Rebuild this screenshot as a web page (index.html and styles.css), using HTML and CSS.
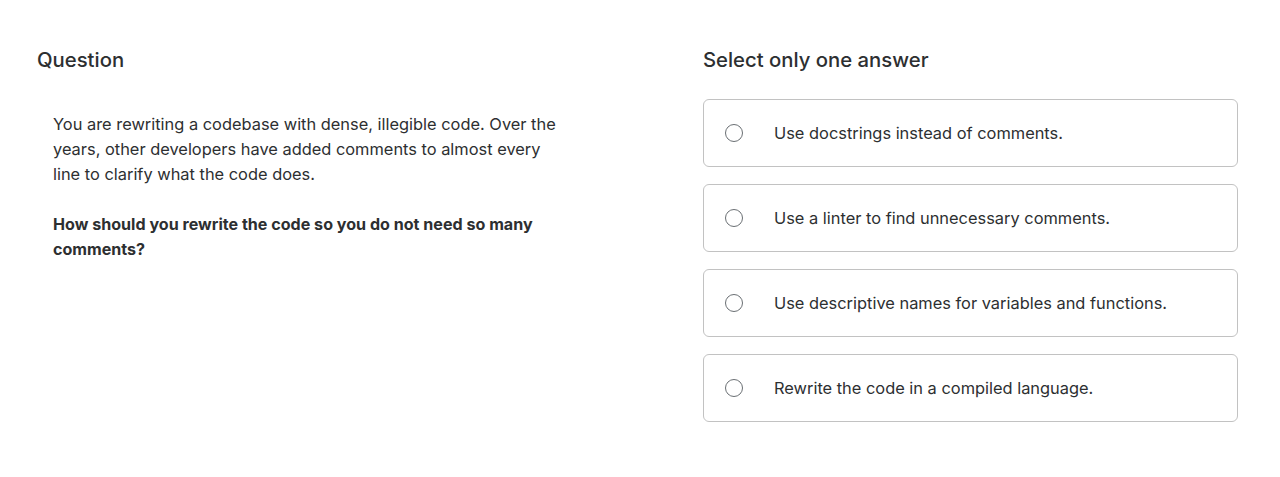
FILE: index.html
```html
<!DOCTYPE html>
<html lang="en">
<head>
<meta charset="utf-8">
<title>Question</title>
<link rel="stylesheet" href="styles.css">
</head>
<body>
<main class="quiz">
  <section class="question">
    <h2 class="heading">Question</h2>
    <div class="prompt">
      <p>You are rewriting a codebase with dense, illegible code. Over the years, other developers have added comments to almost every line to clarify what the code does.</p>
      <p class="ask">How should you rewrite the code so you do not need so many comments?</p>
    </div>
  </section>
  <section class="answers">
    <h2 class="heading">Select only one answer</h2>
    <ul class="options">
      <li class="option"><span class="radio"></span><span class="label">Use docstrings instead of comments.</span></li>
      <li class="option"><span class="radio"></span><span class="label">Use a linter to find unnecessary comments.</span></li>
      <li class="option"><span class="radio"></span><span class="label">Use descriptive names for variables and functions.</span></li>
      <li class="option"><span class="radio"></span><span class="label">Rewrite the code in a compiled language.</span></li>
    </ul>
  </section>
</main>
</body>
</html>
```
FILE: styles.css
```css
* { box-sizing: border-box; }
body {
  margin: 0;
  background: #fff;
  color: #2d2f31;
  font-family: Inter, "Noto Sans", sans-serif;
}
.quiz {
  display: grid;
  grid-template-columns: 1fr 535px;
  padding: 48px 42px 0 37px;
}
.heading {
  margin: 0;
  font-size: 20.3px;
  line-height: 24px;
  font-weight: 500;
}
.prompt {
  padding: 40px 16px 0;
  width: 545px;
  font-size: 16.4px;
  line-height: 25px;
}
.prompt p { margin: 0 0 25px; }
.prompt .ask { font-weight: 700; font-size: 16.1px; }
.options {
  list-style: none;
  margin: 27px 0 0;
  padding: 0;
  display: flex;
  flex-direction: column;
  gap: 17px;
}
.option {
  display: flex;
  align-items: center;
  height: 68px;
  border: 1px solid #c2c2c2;
  border-radius: 6px;
  padding-left: 21px;
  font-size: 16.4px;
}
.radio {
  width: 18px;
  height: 18px;
  border: 1px solid #6a6f73;
  border-radius: 50%;
  flex: none;
}
.label { margin-left: 31px; }
```
